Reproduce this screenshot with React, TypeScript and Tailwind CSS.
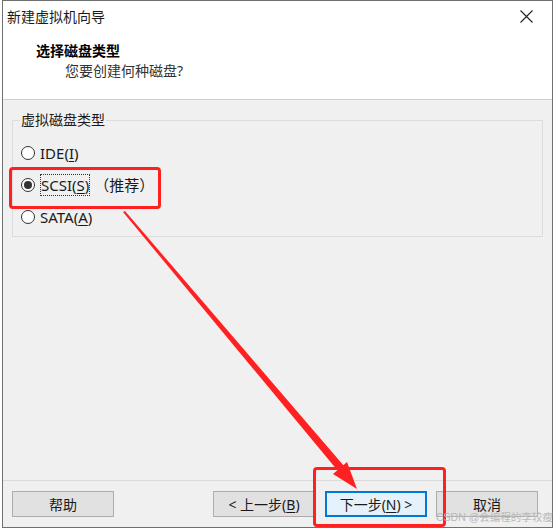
import React from "react";

const cjk = { fontFamily: '"Noto Sans", "Noto Sans CJK SC", sans-serif' };

function Radio({ checked }: { checked?: boolean }) {
  return (
    <span className="w-[14px] h-[14px] rounded-full border border-[#333333] bg-white flex items-center justify-center shrink-0">
      {checked && <span className="w-[8px] h-[8px] rounded-full bg-[#333333]" />}
    </span>
  );
}

function Btn({ children, primary, className = "" }: { children: React.ReactNode; primary?: boolean; className?: string }) {
  return (
    <div
      className={`h-[26px] w-[102px] flex items-center justify-center text-[14px] text-[#1a1a1a] ${
        primary ? "border-2 border-[#0078d7] bg-[#e5f1fb]" : "border border-[#adadad] bg-[#e1e1e1]"
      } ${className}`}
    >
      {children}
    </div>
  );
}

export default function App() {
  return (
    <div className="w-[554px] h-[529px] bg-white pl-[2px] relative overflow-hidden" style={cjk}>
      <div className="w-[551px] h-[528px] border border-[#707070] flex flex-col bg-[#f0f0f0]">
        {/* header */}
        <div className="bg-white h-[99px] border-b border-[#d0d0d0] relative">
          <div className="h-[31px] flex items-center justify-between pl-[4px] pr-[19px]">
            <span className="text-[14px] text-[#1a1a1a]">新建虚拟机向导</span>
            <svg width="13" height="13" viewBox="0 0 13 13">
              <path d="M0.5 0.5 L12.5 12.5 M12.5 0.5 L0.5 12.5" stroke="#222" strokeWidth="1.1" />
            </svg>
          </div>
          <div className="pl-[33px] pt-[9px] text-[14px] font-bold text-black leading-[20px]">选择磁盘类型</div>
          <div className="pl-[62px] text-[14px] text-[#333] leading-[20px]">您要创建何种磁盘?</div>
        </div>

        {/* body */}
        <div className="flex-1 pt-[20px] pl-[9px] pr-[9px]">
          <div className="relative border border-[#dcdcdc] h-[117px] pt-[22px] pl-[8px]">
            <span className="absolute left-[7px] top-[-11px] bg-[#f0f0f0] px-[1px] text-[14px] text-[#1a1a1a] leading-[20px]">
              虚拟磁盘类型
            </span>
            <div className="flex flex-col gap-[12px] text-[15px] text-[#1a1a1a]">
              <div className="flex items-center gap-[5px] h-[20px]">
                <Radio />
                <span>
                  IDE(<span className="underline underline-offset-2">I</span>)
                </span>
              </div>
              <div className="flex items-center gap-[5px] h-[20px]">
                <Radio checked />
                <span className="border border-dotted border-[#333] leading-[20px]">
                  SCSI(<span className="underline underline-offset-2">S</span>)
                </span>
                <span className="-ml-[1px]">（推荐）</span>
              </div>
              <div className="flex items-center gap-[5px] h-[20px]">
                <Radio />
                <span>
                  SATA(<span className="underline underline-offset-2">A</span>)
                </span>
              </div>
            </div>
          </div>
        </div>

        {/* footer */}
        <div className="h-[47px] border-t border-[#dadada] flex items-start pt-[10px] pl-[9px]">
          <Btn>帮助</Btn>
          <Btn className="ml-[99px]">&lt; 上一步(<span className="underline underline-offset-2">B</span>)</Btn>
          <Btn primary className="ml-[10px]">
            下一步(<span className="underline underline-offset-2">N</span>) &gt;
          </Btn>
          <Btn className="ml-[9px]">取消</Btn>
        </div>
      </div>

      {/* annotations */}
      <div className="absolute left-[9px] top-[167px] w-[152px] h-[42px] border-[3px] border-[#ff2121] rounded-[4px]" />
      <div className="absolute left-[313px] top-[467px] w-[133px] h-[60px] border-[3px] border-[#ff2121] rounded-[4px]" />
      <svg className="absolute left-0 top-0" width="554" height="529" viewBox="0 0 554 529">
        <polygon points="123,212 125,211 344,466 338,471" fill="#ff2121" />
        <polygon points="357,489 347,462 333,474" fill="#ff2121" />
      </svg>
      <div
        className="absolute left-[436px] top-[510px] text-[10.5px] text-[#b8b8b8] leading-[14px] whitespace-nowrap"
        style={{ fontFamily: '"Liberation Sans", "Noto Sans CJK SC", sans-serif' }}
      >
        CSDN @会编程的李较瘦
      </div>
    </div>
  );
}
